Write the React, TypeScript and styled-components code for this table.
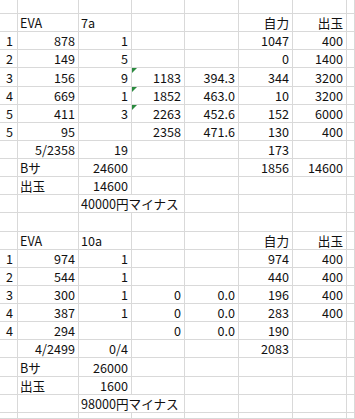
import React from 'react';
import styled, { createGlobalStyle } from 'styled-components';

const GlobalStyle = createGlobalStyle`
  html, body {
    margin: 0;
    padding: 0;
    background: #ffffff;
  }
`;

type Align = 'left' | 'right';

interface CellSpec {
  t: string;
  align?: Align;
  span?: number;
  flag?: boolean;
}

type Row = (string | CellSpec | null)[];

const L = (t: string, span?: number): CellSpec => ({ t, align: 'left', span });
const F = (t: string): CellSpec => ({ t, flag: true });

// columns A..H; '' is an empty cell, null is covered by the span on its left
const rows: Row[] = [
  ['', '', '', '', '', '', '', ''],
  ['', L('EVA'), L('7a'), '', '', '自力', '出玉', ''],
  [L('1'), '878', '1', '', '', '1047', '400', ''],
  [L('2'), '149', '5', '', '', '0', '1400', ''],
  [L('3'), '156', '9', F('1183'), '394.3', '344', '3200', ''],
  [L('4'), '669', '1', F('1852'), '463.0', '10', '3200', ''],
  [L('5'), '411', '3', F('2263'), '452.6', '152', '6000', ''],
  [L('5'), '95', '', '2358', '471.6', '130', '400', ''],
  ['', '5/2358', '19', '', '', '173', '', ''],
  ['', L('Bサ'), '24600', '', '', '1856', '14600', ''],
  ['', L('出玉'), '14600', '', '', '', '', ''],
  ['', '', L('40000円マイナス', 2), null, '', '', '', ''],
  ['', '', '', '', '', '', '', ''],
  ['', L('EVA'), L('10a'), '', '', '自力', '出玉', ''],
  [L('1'), '974', '1', '', '', '974', '400', ''],
  [L('2'), '544', '1', '', '', '440', '400', ''],
  [L('3'), '300', '1', '0', '0.0', '196', '400', ''],
  [L('4'), '387', '1', '0', '0.0', '283', '400', ''],
  [L('4'), '294', '', '0', '0.0', '190', '', ''],
  ['', '4/2499', '0/4', '', '', '2083', '', ''],
  ['', L('Bサ'), '26000', '', '', '', '', ''],
  ['', L('出玉'), '1600', '', '', '', '', ''],
  ['', '', L('98000円マイナス', 2), null, '', '', '', ''],
  ['', '', '', '', '', '', '', ''],
];

const Sheet = styled.div`
  display: grid;
  grid-template-columns: 18px 61px 53px 53px 54px 54px 54px 1fr;
  grid-template-rows: 14px repeat(22, 18.14px) 1fr;
  width: 355px;
  height: 419px;
  overflow: hidden;
  font-family: 'Noto Sans CJK JP', sans-serif;
  font-size: 12.6px;
  color: #111111;
`;

const Cell = styled.div<{ $align: Align; $span: number; $flag: boolean }>`
  position: relative;
  grid-column: span ${(p) => p.$span};
  box-sizing: border-box;
  border-right: 1px solid #d9d9d9;
  border-bottom: 1px solid #d9d9d9;
  display: flex;
  align-items: flex-end;
  justify-content: ${(p) => (p.$align === 'left' ? 'flex-start' : 'flex-end')};
  padding: 0 3px 1px ${(p) => (p.$align === 'left' ? '2px' : '0')};
  line-height: 14px;
  white-space: nowrap;

  &::before {
    content: '';
    display: ${(p) => (p.$flag ? 'block' : 'none')};
    position: absolute;
    top: 0;
    left: 0;
    border-top: 5px solid #2a8a3e;
    border-right: 5px solid transparent;
  }
`;

const LabelCell = styled(Cell)`
  padding-left: 6px;
`;

export default function App() {
  return (
    <>
      <GlobalStyle />
      <Sheet>
        {rows.map((row, r) =>
          row.map((c, i) => {
            if (c === null) return null;
            const spec: CellSpec = typeof c === 'string' ? { t: c } : c;
            const Comp = i === 0 ? LabelCell : Cell;
            return (
              <Comp
                key={`${r}-${i}`}
                $align={spec.align ?? 'right'}
                $span={spec.span ?? 1}
                $flag={!!spec.flag}
              >
                {spec.t}
              </Comp>
            );
          }),
        )}
      </Sheet>
    </>
  );
}
